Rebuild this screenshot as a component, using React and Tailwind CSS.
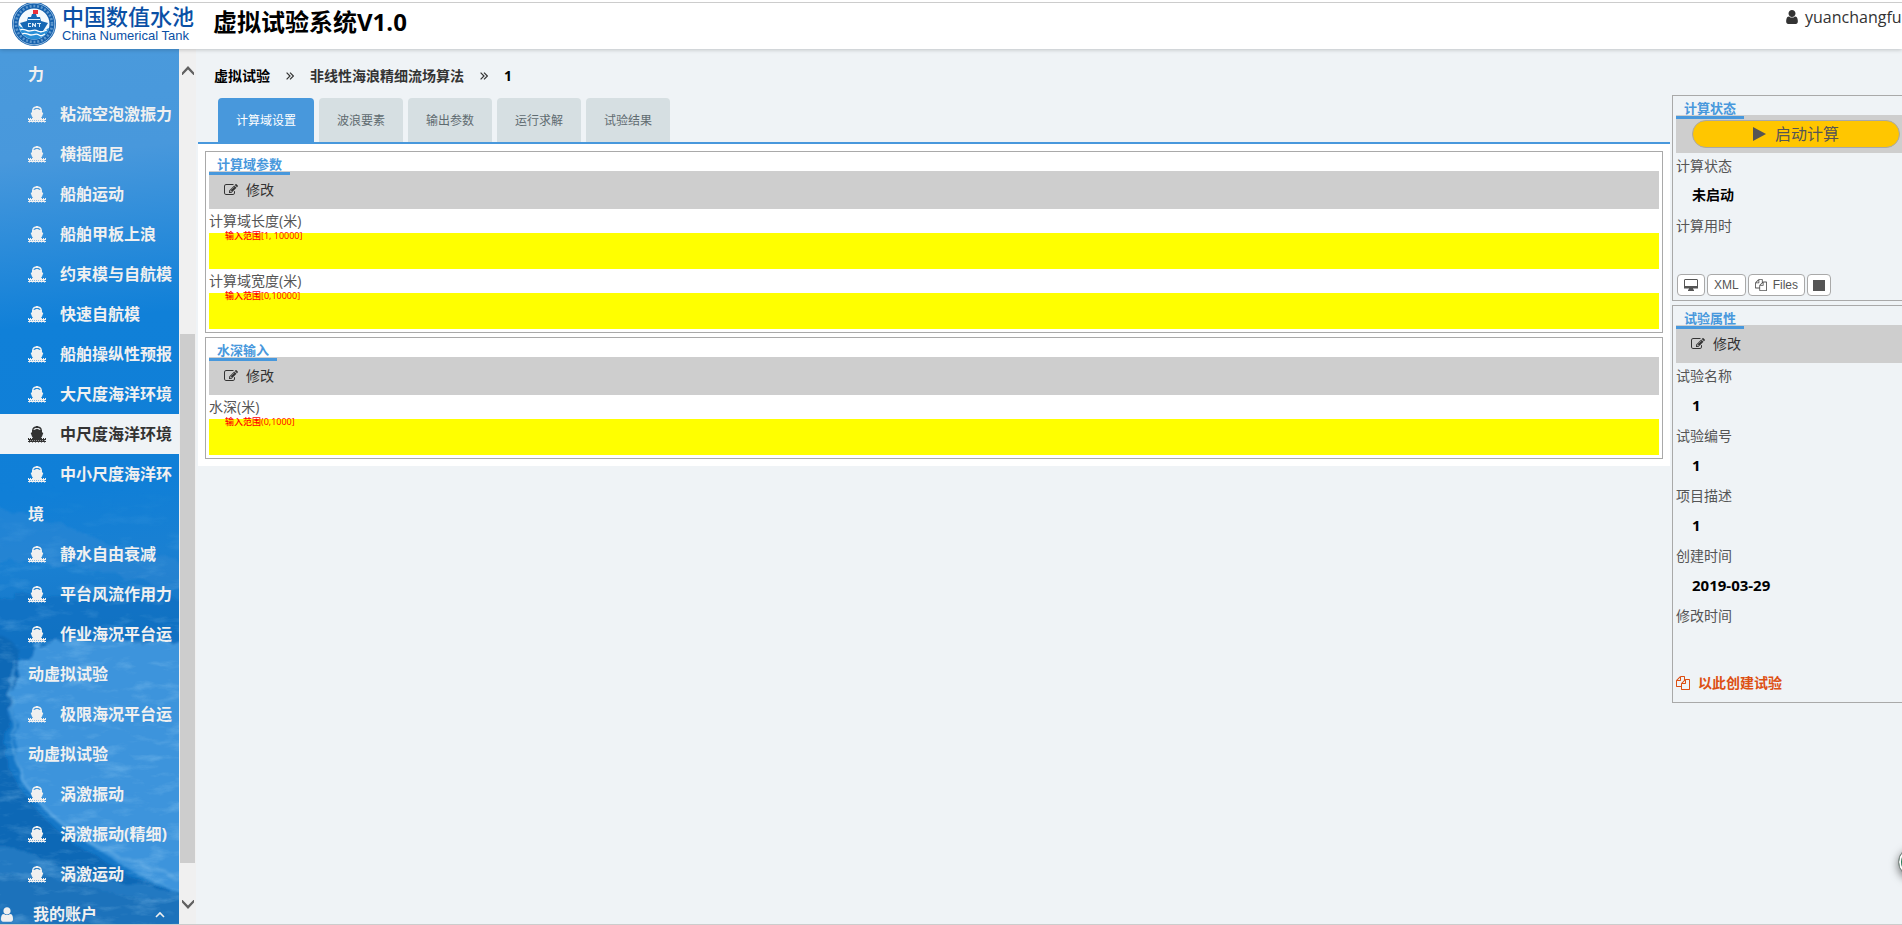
import React, { useState } from 'react';

const menuItems = [
  { text: '力', icon: false },
  { text: '粘流空泡激振力', icon: true },
  { text: '横摇阻尼', icon: true },
  { text: '船舶运动', icon: true },
  { text: '船舶甲板上浪', icon: true },
  { text: '约束模与自航模', icon: true },
  { text: '快速自航模', icon: true },
  { text: '船舶操纵性预报', icon: true },
  { text: '大尺度海洋环境', icon: true },
  { text: '中尺度海洋环境', icon: true, active: true },
  { text: '中小尺度海洋环境', icon: true },
  { text: '静水自由衰减', icon: true },
  { text: '平台风流作用力', icon: true },
  { text: '作业海况平台运动虚拟试验', icon: true },
  { text: '极限海况平台运动虚拟试验', icon: true },
  { text: '涡激振动', icon: true },
  { text: '涡激振动(精细)', icon: true },
  { text: '涡激运动', icon: true },
];

const tabs = ['计算域设置', '波浪要素', '输出参数', '运行求解', '试验结果'];

const ShipIcon = () => (
  <svg viewBox="0 0 18 17" className="inline-block w-[18px] h-[17px] mr-[14px] align-[-3px]" fill="currentColor" aria-hidden="true">
    <path d="M4.700 4.500C5 2 6.700 1 9 1s4 1 4.300 3.500" fill="none" stroke="currentColor" strokeWidth="1.400" />
    <path d="M8 0h2v2H8zM6 4 9 2.800 12 4h2v2.200l1.300.8-1.300 3.500-1 1.500H5l-1-1.500L2.700 7 4 6.200V4z" />
    <path d="M0 12h1v1H0zM2 12h1v1H2zM4 12h10v1H4zM15 12h1v1h-1zM17 12h1v1h-1zM0 13h18v1H0zM1 14h1v1H1zM3 14h1v1H3zM5 14h1v1H5zM7 14h1v1H7zM9 14h1v1H9zM11 14h1v1h-1zM13 14h1v1h-1zM15 14h1v1h-1zM0 15h18v1H0z" />
    <path d="M1 14h16v2H1zM1 16h1v1H1zM4 16h1v1H4zM7 16h1v1H7zM10 16h1v1h-1zM13 16h1v1h-1zM16 16h1v1h-1z" opacity=".5" />
  </svg>
);

const UserIcon = ({ className }) => (
  <svg viewBox="256 128 1280 1536" className={className} fill="currentColor" aria-hidden="true">
    <path d="M1536 1399q0 109-62.500 187t-150.500 78h-854q-88 0-150.500-78t-62.500-187q0-85 8.500-160.500t31.500-152 58.500-131 94-89 134.500-34.500q131 128 313 128t313-128q76 0 134.500 34.500t94 89 58.500 131 31.500 152 8.500 160.500zm-256-887q0 159-112.500 271.500t-271.500 112.500-271.500-112.500-112.500-271.500 112.500-271.500 271.500-112.500 271.500 112.500 112.500 271.500z" />
  </svg>
);

const EditIcon = () => (
  <svg viewBox="0 0 1792 1792" className="w-[14px] h-[14px]" fill="currentColor" aria-hidden="true">
    <path d="M888 1184l116-116-152-152-116 116v56h96v96h56zm440-720q-16-16-33 1l-350 350q-17 17-1 33t33-1l350-350q17-17 1-33zm80 594v190q0 119-84.500 203.500t-203.500 84.500h-832q-119 0-203.500-84.500t-84.500-203.500v-832q0-119 84.500-203.500t203.500-84.500h832q63 0 117 25 15 7 18 23 3 17-9 29l-49 49q-14 14-32 8-23-6-45-6h-832q-66 0-113 47t-47 113v832q0 66 47 113t113 47h832q66 0 113-47t47-113v-126q0-13 9-22l64-64q15-15 35-7t20 29zm-96-738l288 288-672 672h-288v-288zm444 132l-92 92-288-288 92-92q28-28 68-28t68 28l152 152q28 28 28 68t-28 68z" />
  </svg>
);

const FilesIcon = ({ className }) => (
  <svg viewBox="0 0 1792 1792" className={className} fill="currentColor" aria-hidden="true">
    <path d="M1696 384q40 0 68 28t28 68v1216q0 40-28 68t-68 28h-960q-40 0-68-28t-28-68v-288h-544q-40 0-68-28t-28-68v-672q0-40 20-88t48-76l408-408q28-28 76-48t88-20h416q40 0 68 28t28 68v328q68-40 128-40h416zm-544 213l-299 299h299v-299zm-640-384l-299 299h299v-299zm196 647l316-316v-416h-384v416q0 40-28 68t-68 28h-416v640h512v-256q0-40 20-88t48-76zm956 804v-1152h-384v416q0 40-28 68t-68 28h-416v640h896z" />
  </svg>
);

const DoubleRight = () => (
  <svg viewBox="0 0 8 8" className="w-2 h-2 mx-4" fill="none" stroke="#333" strokeWidth="1.200" aria-hidden="true">
    <path d="M.6.600 4 4 .6 7.400M4 .6 7.400 4 4 7.400" />
  </svg>
);

const Chevron = ({ down }) => (
  <svg viewBox="0 0 12 9" className={down ? 'w-3 h-[9px] rotate-180' : 'w-3 h-[9px]'} aria-hidden="true">
    <path d="M0 6.500 6 0l6 6.500V9h-.6L6 3.600.6 9H0z" fill="#606060" />
  </svg>
);

const Logo = () => (
  <svg viewBox="1 0 44 44" className="shrink-0 w-[44px] h-[44px]" aria-hidden="true">
    <circle cx="23" cy="21" r="22" fill="#1460ad" />
    <circle cx="23" cy="21" r="20.800" fill="none" stroke="#c4dcf2" strokeWidth=".7" />
    <circle cx="23" cy="21" r="18" fill="none" stroke="#9fc6e8" strokeWidth="2.600" strokeDasharray="2 1.800" opacity=".55" />
    <circle cx="23" cy="21" r="15.500" fill="#f4f9fd" />
    <path d="M7.700 22c3 4 6.500 2 9.500 4s8 1 11 3 6-3 10-4A15.500 15.500 0 0 1 23 36.500 15.500 15.500 0 0 1 7.700 22z" fill="#2b8fd6" />
    <path d="M9 20l7-2 1-4h3l1-3h4l1 3h3l1 4 7 2-5 8H14z" fill="#1668b4" />
    <path d="M22 7h1v5h-1z" fill="#1668b4" />
    <path d="M22 7h5v4h-5z" fill="#e8303a" />
    <path d="M17 16h12v1H17zM17 20h3v1h-2v2h2v1h-3zM21 20h1l2 2v-2h1v4h-1l-2-2v2h-1zM26 20h4v1h-1v3h-1v-3h-2z" fill="#d9ecf9" />
    <path d="M9 27c4-2 6 1 9 1s5-2 9 0 6 0 9-1M11 31c4-2 6 1 9 1s5-2 8 0 4 0 6-1" fill="none" stroke="#fff" strokeWidth="1.300" />
  </svg>
);

const Waves = () => (
  <svg viewBox="0 0 179 875" preserveAspectRatio="none" className="absolute inset-0 w-full h-full" aria-hidden="true">
    <defs>
      <linearGradient id="sea" gradientUnits="userSpaceOnUse" x1="60" y1="0" x2="160" y2="875">
        <stop offset="0" stopColor="#4a9adc" />
        <stop offset=".12" stopColor="#4898dc" />
        <stop offset=".31" stopColor="#1080d8" />
        <stop offset=".5" stopColor="#107fd7" />
        <stop offset=".58" stopColor="#1a80d2" />
        <stop offset=".66" stopColor="#1577c8" />
      </linearGradient>
      <filter id="soft" x="-20%" y="-20%" width="140%" height="140%">
        <feTurbulence type="fractalNoise" baseFrequency=".06" numOctaves="4" seed="4" result="n" />
        <feDisplacementMap in="SourceGraphic" in2="n" scale="16" />
        <feGaussianBlur stdDeviation="1" />
      </filter>
      <filter id="foam" x="0" y="0" width="100%" height="100%">
        <feTurbulence type="fractalNoise" baseFrequency=".03 .09" numOctaves="5" seed="9" />
        <feColorMatrix values="0 0 0 0 .4  0 0 0 0 .7  0 0 0 0 .95  3 0 0 0 -1.500" />
      </filter>
      <linearGradient id="fade" x1="0" y1="0" x2="0" y2="1">
        <stop offset="0" stopColor="#000" />
        <stop offset=".4" stopColor="#fff" />
      </linearGradient>
      <mask id="low">
        <rect y="430" width="179" height="445" fill="url(#fade)" />
      </mask>
    </defs>
    <rect width="179" height="875" fill="url(#sea)" />
    <g filter="url(#soft)">
      <path d="M-20 460c60-5 110 40 220 55v30C120 530 60 505-20 515z" fill="#3f90d4" opacity=".3" />
      <path d="M-20 555c40-20 90 0 120-5s60-10 110 10v50H-20z" fill="#0d70c2" opacity=".8" />
      <path d="M10 630c20-40 60-50 100-40s60 0 90-5v270C130 820 60 790 20 730z" fill="#3c94dc" />
      <path d="M-20 590c45-10 45 20 32 60s-12 65 20 105 90 75 170 95v60H-20z" fill="#0b68b6" />
      <path d="M-20 790c50 10 100 45 220 55v50H-20z" fill="#2479c2" />
      <path d="M-20 825c60-8 120 25 220 30v30H-20z" fill="#1c72bb" />
      <path d="M13 610c0 50-10 95 20 135s70 60 150 85" fill="none" stroke="#6cb2e8" strokeWidth="3" opacity=".5" />
    </g>
    <g mask="url(#low)">
      <rect y="430" width="179" height="445" filter="url(#foam)" opacity=".25" />
    </g>
  </svg>
);

const Sidebar = () => (
  <aside className="flex shrink-0 w-[196px] bg-[#f0f0f0]">
    <nav className="relative w-[179px] overflow-hidden pt-[5px] font-bold text-base leading-10 text-[#f0f0f0]">
      <Waves />
      <ul className="relative">
        {menuItems.map((item, i) => (
          <li key={i}>
            <a href="#" className={item.active ? 'block pl-7 pr-1 bg-[#eff3f6] text-[#333]' : 'block pl-7 pr-1'}>
              {item.icon && <ShipIcon />}
              {item.text}
            </a>
          </li>
        ))}
        <li>
          <a href="#" className="flex items-center pl-px pr-[14px]">
            <UserIcon className="w-3 h-[15px] mr-5" />
            <span className="flex-1">我的账户</span>
            <svg viewBox="0 0 10 7" className="w-[10px] h-[7px]" fill="none" stroke="currentColor" strokeWidth="1.600" aria-hidden="true">
              <path d="M1 6l4-4 4 4" />
            </svg>
          </a>
        </li>
      </ul>
    </nav>
    {/* scroll bar */}
    <div className="flex flex-col flex-1 items-center pl-px pr-px pt-[17px] pb-[15px]" aria-hidden="true">
      <Chevron />
      <div className="flex-[259]" />
      <div className="flex-[529] w-full bg-[#cdcdcd]" />
      <div className="flex-[37]" />
      <Chevron down />
    </div>
  </aside>
);

const Panel = ({ title, open, children }) => (
  <section className={open ? 'border border-r-0 border-[#a9a9a9] p-[3px] pr-0' : 'border border-[#a9a9a9] p-[3px]'}>
    <h2 className="relative w-fit h-5 -mb-1 px-2 border-b-3 border-[#4898dc] text-[13px] leading-[18px] font-bold text-[#4898dc]">{title}</h2>
    {children}
  </section>
);

const EditBar = () => (
  <div className="flex items-center h-[38px] pl-[15px] bg-[#cecece]">
    <button className="flex items-center gap-2 text-sm text-[#333]">
      <EditIcon />
      修改
    </button>
  </div>
);

const Field = ({ id, label, hint }) => (
  <div>
    <label htmlFor={id} className="block h-6 text-sm leading-6 text-[#555]">{label}</label>
    <div className="relative h-9">
      <input id={id} type="text" className="block w-full h-9 px-4 bg-[#ffff00] outline-none" />
      <span className="absolute left-4 -top-1 text-[9px] leading-[14px] font-medium text-[#ff0000]">{hint}</span>
    </div>
  </div>
);

const Info = ({ label, value, wide }) => (
  <div>
    <dt className="h-6 text-sm leading-[26px] text-[#555]">{label}</dt>
    <dd className={wide ? 'h-9 pl-4 text-[15px] leading-9 font-bold text-black' : 'h-9 pl-4 text-sm leading-9 font-bold text-black'}>{value}</dd>
  </div>
);

const smallButton = "flex items-center h-[22px] border border-[#a9a9a9] rounded bg-white font-['Liberation_Sans'] text-xs text-[#555]";

const App = () => {
  const [active, setActive] = useState(0);

  return (
    <div className="relative flex flex-col h-screen overflow-hidden border-b border-[#ccc] bg-[#eff3f6] font-['Open_Sans','Noto_Sans_CJK_SC',sans-serif]">
      <header className="relative z-10 flex shrink-0 h-[49px] bg-white pt-[2px] shadow-[0_1px_4px_rgba(0,0,0,0.2)]">
        <div className="flex flex-1 border-t border-[#ccc]">
          <div className="flex w-[213px] pl-3">
            <Logo />
            <div className="pl-[6px] whitespace-nowrap text-[#0a50a5]">
              <div className="font-['Noto_Sans_CJK_SC'] text-[22px] leading-[25px] font-medium">中国数值水池</div>
              <div className="font-['Liberation_Sans'] text-[13px] leading-4">China Numerical Tank</div>
            </div>
          </div>
          <h1 className="flex-1 text-2xl leading-[38px] font-bold text-black">虚拟试验系统V1.0</h1>
          <div className="flex w-[116px] whitespace-nowrap text-base leading-7 text-[#333]">
            <UserIcon className="shrink-0 w-3 h-[14px] mt-[7px] mr-[7px]" />
            <span>yuanchangfu</span>
          </div>
        </div>
      </header>

      <div className="flex flex-1 min-h-0">
        <Sidebar />

        <main className="flex-1 min-w-0 pl-[2px]">
          <div className="flex items-center h-[49px] pl-4 pt-[5px] text-sm font-bold">
            <a href="#" className="text-black">虚拟试验</a>
            <DoubleRight />
            <a href="#" className="text-[#333]">非线性海浪精细流场算法</a>
            <DoubleRight />
            <span className="text-black">1</span>
          </div>
          <div className="flex gap-[5px] pl-5 border-b-2 border-[#4898dc]" role="tablist">
            {tabs.map((tab, i) => (
              <button
                key={tab}
                role="tab"
                aria-selected={active === i}
                onClick={() => setActive(i)}
                className={active === i
                  ? 'h-11 px-[18px] pt-[2px] rounded-t bg-[#4898dc] text-xs text-white'
                  : 'h-11 px-[18px] pt-[2px] rounded-t bg-[#d6dfe2] text-xs text-[#5f6b70]'}
              >
                {tab}
              </button>
            ))}
          </div>
          <div className="flex flex-col gap-1 p-[7px] bg-white">
            <Panel title="计算域参数">
              <EditBar />
              <Field id="length" label="计算域长度(米)" hint="输入范围[1, 10000]" />
              <Field id="width" label="计算域宽度(米)" hint="输入范围[0,10000]" />
            </Panel>
            <Panel title="水深输入">
              <EditBar />
              <Field id="depth" label="水深(米)" hint="输入范围(0,1000]" />
            </Panel>
          </div>
        </main>

        <aside className="flex flex-col gap-1 shrink-0 w-[232px] pl-[2px] pt-[46px]">
          <Panel title="计算状态" open>
            <div className="flex items-center h-[38px] pl-4 pr-[2px] bg-[#cecece]">
              <button className="flex flex-1 items-center justify-center gap-[9px] h-7 border border-[#a9a9a9] rounded-full bg-[#ffc600] text-base text-[#555]">
                <svg viewBox="0 0 13 14" className="w-[13px] h-[14px]" aria-hidden="true">
                  <path d="M0 0l13 7-13 7z" fill="#555" />
                </svg>
                启动计算
              </button>
            </div>
            <dl>
              <Info label="计算状态" value="未启动" />
              <Info label="计算用时" value="" />
            </dl>
            <div className="flex gap-[2px] h-6 pl-px pt-px">
              <button className={smallButton + ' px-[6px]'} aria-label="desktop">
                <svg viewBox="0 0 14 12" className="w-[14px] h-3" aria-hidden="true">
                  <path d="M1 .500h12a.5.500 0 0 1 .5.500v7H.5V1A.5.500 0 0 1 1 .5z" fill="none" stroke="#555" />
                  <path d="M0 7h14v2.500H0zM5 9h4v1.500h1V12H4v-1.500h1z" fill="#555" />
                </svg>
              </button>
              <button className={smallButton + ' px-[6px]'}>XML</button>
              <button className={smallButton + ' px-[6px] gap-[6px]'}>
                <FilesIcon className="w-3 h-3" />
                Files
              </button>
              <button className={smallButton + ' px-[5px]'} aria-label="stop">
                <span className="block w-3 h-[11px] bg-[#555]" />
              </button>
            </div>
          </Panel>
          <Panel title="试验属性" open>
            <EditBar />
            <dl>
              <Info label="试验名称" value="1" wide />
              <Info label="试验编号" value="1" wide />
              <Info label="项目描述" value="1" wide />
              <Info label="创建时间" value="2019-03-29" wide />
              <Info label="修改时间" value="" />
            </dl>
            <a href="#" className="flex items-center gap-2 h-9 pt-1 text-sm font-bold text-[#dd4f12]">
              <FilesIcon className="w-[14px] h-[14px]" />
              以此创建试验
            </a>
          </Panel>
        </aside>
      </div>

      {/* floating helper at the window edge */}
      <button
        className="absolute -right-[26px] bottom-[47px] size-[30px] rounded-full border border-[#888] bg-[#2a7a5a] ring-2 ring-white ring-inset shadow-[0_3px_8px_rgba(0,0,0,0.5)]"
        aria-label="help"
      />
    </div>
  );
};

export default App;
